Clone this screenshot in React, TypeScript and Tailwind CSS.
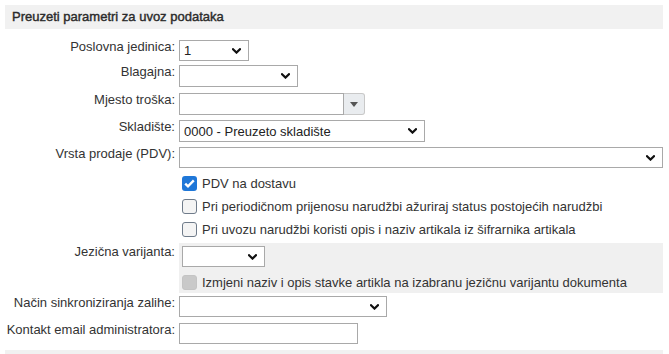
import type { ReactNode } from 'react'

const LABEL_W = 'w-[170px] shrink-0 text-right leading-[15px] pt-[1px]'

function Chevron() {
  return (
    <svg width="9" height="6" viewBox="0 0 9 6" className="pointer-events-none absolute right-[7px] top-1/2 -translate-y-1/2">
      <path d="M1 1.2L4.5 4.6L8 1.2" fill="none" stroke="#111" strokeWidth="2.2" strokeLinecap="square" />
    </svg>
  )
}

function Select({ width, value = '', height = 'h-[22px]' }: { width: string; value?: string; height?: string }) {
  return (
    <div className={`relative ${width} ${height} border border-[#a9a9a9] bg-white`}>
      <select
        defaultValue={value}
        className="h-full w-full appearance-none bg-transparent pl-[4px] pr-5 text-[13px] leading-none text-[#222] outline-none"
      >
        <option value={value}>{value}</option>
      </select>
      <Chevron />
    </div>
  )
}

function Row({ label, children, pb = 'pb-[3px]' }: { label: string; children: ReactNode; pb?: string }) {
  return (
    <div className={`flex ${pb}`}>
      <div className={LABEL_W}>{label}</div>
      <div className="ml-[4px] flex-1 pt-[2px]">{children}</div>
    </div>
  )
}

function Box({ checked = false, disabled = false }: { checked?: boolean; disabled?: boolean }) {
  if (checked)
    return (
      <span className="flex h-[15px] w-[15px] items-center justify-center rounded-[3px] bg-[#1f77d8]">
        <svg width="11" height="9" viewBox="0 0 11 9">
          <path d="M1.2 4.6L4 7.3L9.8 1.4" fill="none" stroke="#fff" strokeWidth="2.4" />
        </svg>
      </span>
    )
  if (disabled) return <span className="h-[15px] w-[15px] rounded-[3px] border border-[#c4c4c4] bg-[#c9c9c9]" />
  return <span className="h-[15px] w-[15px] rounded-[3px] border border-[#6f7b8a] bg-[#f4f4f4]" />
}

function CheckRow({ text, checked }: { text: string; checked?: boolean }) {
  return (
    <div className="flex h-[23px] items-center">
      <div className="w-[170px] shrink-0" />
      <label className="ml-[7px] flex items-center gap-[5px]">
        <Box checked={checked} />
        <span>{text}</span>
      </label>
    </div>
  )
}

export default function App() {
  return (
    <div className="min-h-[354px] bg-white pt-[5px] font-['Liberation_Sans',Arial,sans-serif] text-[13px] text-[#333]">
      <div className="ml-[5px] w-[658px]">
        {/* Header */}
        <div className="flex h-[24px] items-center bg-[#f1f1f1] pl-[7px] text-[13px] text-[#2b2b2b] [-webkit-text-stroke:0.4px_#2b2b2b]">
          Preuzeti parametri za uvoz podataka
        </div>

        <div className="mt-[9px]">
          <Row label="Poslovna jedinica:" pb="pb-[2px]">
            <Select width="w-[70px]" value="1" height="h-[21px]" />
          </Row>
          <Row label="Blagajna:" pb="pb-[4px]">
            <Select width="w-[119px]" />
          </Row>
          <Row label="Mjesto troška:">
            <div className="flex h-[22px] w-[186px]">
              <input className="h-full w-[165px] border border-[#a9a9a9] bg-white outline-none" />
              <button className="flex h-full w-[21px] items-center justify-center rounded-r-[3px] border border-l-0 border-[#c8c8c8] bg-[#e9ecef]">
                <svg width="8" height="5" viewBox="0 0 8 5">
                  <path d="M0 0H8L4 5Z" fill="#555" />
                </svg>
              </button>
            </div>
          </Row>
          <Row label="Skladište:">
            <Select width="w-[246px]" value="0000 - Preuzeto skladište" />
          </Row>
          <Row label="Vrsta prodaje (PDV):" pb="pb-[4px]">
            <Select width="w-[484px]" height="h-[21px]" />
          </Row>

          <CheckRow text="PDV na dostavu" checked />
          <CheckRow text="Pri periodičnom prijenosu narudžbi ažuriraj status postojećih narudžbi" />
          <CheckRow text="Pri uvozu narudžbi koristi opis i naziv artikala iz šifrarnika artikala" />

          {/* Language variant */}
          <div className="mt-[2px] flex">
            <div className={LABEL_W}>Jezična varijanta:</div>
            <div className="ml-[4px] flex h-[50px] flex-1 flex-col bg-[#f0f0f0] pl-[3px] pt-[3px]">
              <Select width="w-[83px]" height="h-[21px]" />
              <div className="mt-[6px] flex items-center gap-[5px]">
                <Box disabled />
                <span>Izmjeni naziv i opis stavke artikla na izabranu jezičnu varijantu dokumenta</span>
              </div>
            </div>
          </div>

          <div className="mt-[1px]">
            <Row label="Način sinkroniziranja zalihe:" pb="pb-[4px]">
              <Select width="w-[208px]" height="h-[21px]" />
            </Row>
            <Row label="Kontakt email administratora:" pb="pb-0">
              <input className="h-[21px] w-[179px] border border-[#a9a9a9] bg-white outline-none" />
            </Row>
          </div>
        </div>

        <div className="mt-[6px] h-[10px] bg-[#f1f1f1]" />
      </div>
    </div>
  )
}
